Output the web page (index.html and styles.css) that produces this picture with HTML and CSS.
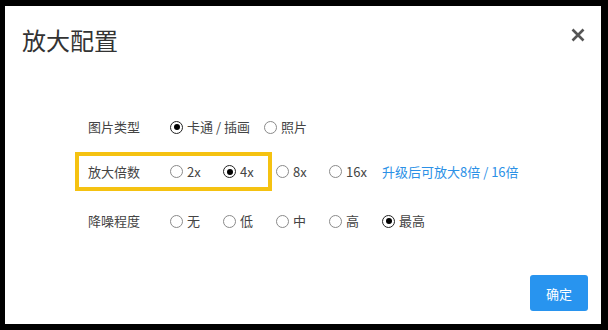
FILE: index.html
```html
<!DOCTYPE html>
<html lang="zh-CN">
<head>
<meta charset="utf-8">
<link rel="stylesheet" href="styles.css">
</head>
<body>
<div class="dialog">
  <div class="header">
    <h1 class="title">放大配置</h1>
    <svg class="close" width="14" height="14" viewBox="0 0 14 14"><path d="M1.5 1.5 L12.5 12.5 M12.5 1.5 L1.5 12.5" stroke="#555" stroke-width="2.6" stroke-linecap="butt"/></svg>
  </div>
  <div class="form">
    <div class="row row-type">
      <span class="label">图片类型</span>
      <span class="opt"><i class="radio on"></i>卡通 / 插画</span>
      <span class="opt"><i class="radio"></i>照片</span>
    </div>
    <div class="row row-scale">
      <span class="highlight">
        <span class="label">放大倍数</span>
        <span class="opt"><i class="radio"></i>2x</span>
        <span class="opt last"><i class="radio on"></i>4x</span>
      </span>
      <span class="opt"><i class="radio"></i>8x</span>
      <span class="opt"><i class="radio"></i>16x</span>
      <a class="upgrade">升级后可放大8倍 / 16倍</a>
    </div>
    <div class="row row-noise">
      <span class="label">降噪程度</span>
      <span class="opt"><i class="radio"></i>无</span>
      <span class="opt"><i class="radio"></i>低</span>
      <span class="opt"><i class="radio"></i>中</span>
      <span class="opt"><i class="radio"></i>高</span>
      <span class="opt"><i class="radio on"></i>最高</span>
    </div>
  </div>
  <div class="footer">
    <button class="ok">确定</button>
  </div>
</div>
</body>
</html>
```
FILE: styles.css
```css
* { box-sizing: border-box; }
html, body { margin: 0; height: 100%; }
body {
  background: #000;
  padding: 6px 7px 6px 5px;
  font-family: "Noto Sans CJK SC", "Noto Sans", sans-serif;
  font-size: 13px;
  color: #444;
}
.dialog {
  background: #fff;
  height: 318px;
  display: flex;
  flex-direction: column;
}
.header {
  display: flex;
  justify-content: space-between;
  align-items: flex-start;
  padding: 18px 16px 0 17px;
}
.title {
  margin: 0;
  font-size: 24px;
  font-weight: normal;
  line-height: 32px;
  color: #333;
}
.close {
  display: block;
  margin-top: 4px;
}
.form {
  padding: 59px 0 0 83px;
  display: flex;
  flex-direction: column;
}
.row {
  display: flex;
  align-items: center;
  height: 24px;
  line-height: 20px;
}
.row-scale {
  height: 39px;
  margin-top: 13px;
}
.row-noise { margin-top: 18px; }
.label {
  width: 82px;
  flex: none;
}
.opt {
  display: inline-flex;
  align-items: center;
  min-width: 39px;
  margin-right: 14px;
  color: #444;
}
.opt.last { margin-right: 0; }
.radio {
  width: 13px;
  height: 13px;
  border: 1px solid #8a8a8a;
  border-radius: 50%;
  margin-right: 4px;
  flex: none;
  display: inline-flex;
  align-items: center;
  justify-content: center;
}
.radio.on { border-color: #222; }
.radio.on::after {
  content: "";
  width: 6px;
  height: 6px;
  border-radius: 50%;
  background: #000;
}
.highlight {
  display: flex;
  align-items: center;
  height: 39px;
  border: 4px solid #f5c211;
  margin-left: -13px;
  padding: 0 6px 0 9px;
  margin-right: 4px;
}
.upgrade {
  color: #2b90e6;
  text-decoration: none;
}
.footer {
  margin-top: auto;
  display: flex;
  justify-content: flex-end;
  padding: 0 13px 13px 0;
}
.ok {
  width: 58px;
  height: 36px;
  border: none;
  border-radius: 3px;
  background: #2894ef;
  color: #fff;
  font-family: inherit;
  font-size: 13px;
  padding: 0;
}
```
